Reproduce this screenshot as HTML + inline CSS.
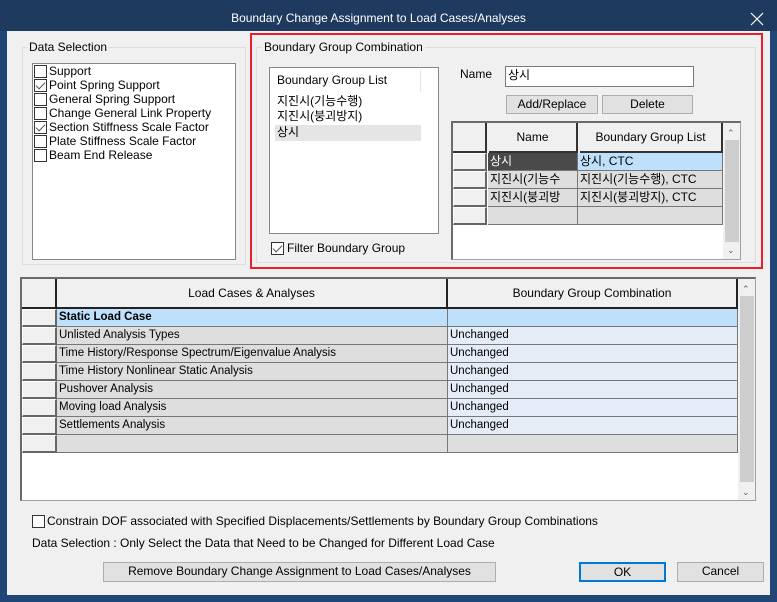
<!DOCTYPE html>
<html><head><meta charset="utf-8"><style>
*{box-sizing:border-box;margin:0;padding:0}
body{width:777px;height:602px;background:#1f4677;font-family:"Liberation Sans","Noto Sans CJK KR",sans-serif;font-size:12px;color:#000;position:relative;overflow:hidden}
.a{position:absolute}
.t{position:absolute;white-space:nowrap;line-height:14px}
.cb{position:absolute;width:13px;height:13px;border:1px solid #333;background:#fff}
.cb.on::after{content:"";position:absolute;left:3px;top:0px;width:4px;height:8px;border-right:1.2px solid #555;border-bottom:1.2px solid #555;transform:rotate(45deg)}
.btn{position:absolute;background:#e1e1e1;border:1px solid #adadad;text-align:center;line-height:17px}
.cell{position:absolute;border-right:1px solid #777;border-bottom:1px solid #777;white-space:nowrap;overflow:hidden;padding-left:2px;line-height:17px}
.rh{position:absolute;background:#f0f0f0;border:1px solid #fff;border-right:2px solid #666;border-bottom:2px solid #666}
</style></head><body>
<div class="a" style="left:0;top:0;width:777px;height:31px;background:#1e3a5f"></div>
<div class="t" style="left:0;width:757px;top:11px;text-align:center;color:#fff;font-size:12px">Boundary Change Assignment to Load Cases/Analyses</div>
<svg class="a" style="left:750px;top:12px" width="14" height="14"><path d="M1 1L13 13M13 1L1 13" stroke="#fff" stroke-width="1.2"/></svg>
<div class="a" style="left:7px;top:31px;width:763px;height:564px;background:#f0f0f0"></div>

<!-- Data selection -->
<div class="a" style="left:22px;top:47px;width:224px;height:218px;border:1px solid #dcdcdc"></div>
<div class="t" style="left:27px;top:40px;background:#f0f0f0;padding:0 2px">Data Selection</div>
<div class="a" style="left:32px;top:63px;width:204px;height:197px;background:#fff;border:1px solid #828790"></div>
<div class="cb" style="left:34px;top:65px"></div><div class="t" style="left:49px;top:64px">Support</div>
<div class="cb on" style="left:34px;top:79px"></div><div class="t" style="left:49px;top:78px">Point Spring Support</div>
<div class="cb" style="left:34px;top:93px"></div><div class="t" style="left:49px;top:92px">General Spring Support</div>
<div class="cb" style="left:34px;top:107px"></div><div class="t" style="left:49px;top:106px">Change General Link Property</div>
<div class="cb on" style="left:34px;top:121px"></div><div class="t" style="left:49px;top:120px">Section Stiffness Scale Factor</div>
<div class="cb" style="left:34px;top:135px"></div><div class="t" style="left:49px;top:134px">Plate Stiffness Scale Factor</div>
<div class="cb" style="left:34px;top:149px"></div><div class="t" style="left:49px;top:148px">Beam End Release</div>

<!-- Red box -->
<div class="a" style="left:250px;top:33px;width:513px;height:236px;border:2px solid #e8202a"></div>
<div class="a" style="left:256px;top:47px;width:500px;height:216px;border:1px solid #dcdcdc"></div>
<div class="t" style="left:262px;top:40px;background:#f0f0f0;padding:0 2px">Boundary Group Combination</div>
<div class="a" style="left:269px;top:67px;width:170px;height:167px;background:#fff;border:1px solid #828790"></div>
<div class="a" style="left:420px;top:70px;width:1px;height:22px;background:#e5e5e5"></div>
<div class="t" style="left:277px;top:73px">Boundary Group List</div>
<div class="t" style="left:277px;top:94px">지진시(기능수행)</div>
<div class="t" style="left:277px;top:109px">지진시(붕괴방지)</div>
<div class="a" style="left:275px;top:125px;width:146px;height:16px;background:#e5e5e5"></div>
<div class="t" style="left:277px;top:125px">상시</div>
<div class="cb on" style="left:271px;top:242px"></div><div class="t" style="left:287px;top:241px">Filter Boundary Group</div>
<div class="t" style="left:460px;top:67px">Name</div>
<div class="a" style="left:505px;top:66px;width:189px;height:21px;background:#fff;border:1px solid #7a7a7a"></div>
<div class="t" style="left:508px;top:68px">상시</div>
<div class="btn" style="left:506px;top:95px;width:92px;height:19px">Add/Replace</div>
<div class="btn" style="left:602px;top:95px;width:91px;height:19px">Delete</div>

<!-- small grid -->
<div class="a" style="left:451px;top:121px;width:290px;height:139px;background:#fff;border:1px solid #a0a0a0;border-top:2px solid #6a6a6a;border-left:2px solid #6a6a6a"></div>
<div class="a" style="left:453px;top:123px;width:270px;height:30px;background:#f0f0f0"></div>
<div class="a" style="left:453px;top:123px;width:34px;height:30px;border-right:2px solid #333;border-bottom:2px solid #333"></div>
<div class="a" style="left:489px;top:123px;width:89px;height:30px;border-right:2px solid #333;border-bottom:2px solid #333;text-align:center;line-height:28px">Name</div>
<div class="a" style="left:580px;top:123px;width:143px;height:30px;border-right:2px solid #333;border-bottom:2px solid #333;text-align:center;line-height:28px">Boundary Group List</div>
<div class="rh" style="left:453px;top:153px;width:34px;height:18px"></div>
<div class="rh" style="left:453px;top:171px;width:34px;height:18px"></div>
<div class="rh" style="left:453px;top:189px;width:34px;height:18px"></div>
<div class="rh" style="left:453px;top:207px;width:34px;height:18px"></div>
<div class="cell" style="left:488px;top:153px;width:90px;height:18px;background:#4a4a4a;color:#fff">상시</div>
<div class="cell" style="left:578px;top:153px;width:145px;height:18px;background:#bfe0fa">상시, CTC</div>
<div class="cell" style="left:488px;top:171px;width:90px;height:18px;background:#dedede">지진시(기능수</div>
<div class="cell" style="left:578px;top:171px;width:145px;height:18px;background:#dedede">지진시(기능수행), CTC</div>
<div class="cell" style="left:488px;top:189px;width:90px;height:18px;background:#dedede">지진시(붕괴방</div>
<div class="cell" style="left:578px;top:189px;width:145px;height:18px;background:#dedede">지진시(붕괴방지), CTC</div>
<div class="cell" style="left:488px;top:207px;width:90px;height:18px;background:#dedede"></div>
<div class="cell" style="left:578px;top:207px;width:145px;height:18px;background:#dedede"></div>
<div class="a" style="left:723px;top:123px;width:17px;height:136px;background:#f0f0f0"></div>
<div class="a" style="left:725px;top:140px;width:14px;height:102px;background:#cdcdcd"></div>
<div class="t" style="left:727px;top:126px;font-size:9px;color:#606060">&#8963;</div>
<div class="t" style="left:727px;top:243px;font-size:9px;color:#606060">&#8964;</div>

<!-- big grid -->
<div class="a" style="left:20px;top:277px;width:736px;height:224px;background:#fff;border:1px solid #a0a0a0;border-top:2px solid #6a6a6a;border-left:2px solid #6a6a6a"></div>
<div class="a" style="left:22px;top:279px;width:715px;height:30px;background:#f0f0f0"></div>
<div class="a" style="left:22px;top:279px;width:35px;height:30px;border-right:2px solid #222;border-bottom:2px solid #222"></div>
<div class="a" style="left:57px;top:279px;width:391px;height:30px;border-right:2px solid #222;border-bottom:2px solid #222;text-align:center;line-height:28px;font-size:12px">Load Cases &amp; Analyses</div>
<div class="a" style="left:448px;top:279px;width:290px;height:30px;border-right:2px solid #222;border-bottom:2px solid #222;text-align:center;line-height:28px;font-size:12px">Boundary Group Combination</div>
<div class="rh" style="left:22px;top:309px;width:35px;height:18px"></div>
<div class="rh" style="left:22px;top:327px;width:35px;height:18px"></div>
<div class="rh" style="left:22px;top:345px;width:35px;height:18px"></div>
<div class="rh" style="left:22px;top:363px;width:35px;height:18px"></div>
<div class="rh" style="left:22px;top:381px;width:35px;height:18px"></div>
<div class="rh" style="left:22px;top:399px;width:35px;height:18px"></div>
<div class="rh" style="left:22px;top:417px;width:35px;height:18px"></div>
<div class="rh" style="left:22px;top:435px;width:35px;height:18px"></div>
<div class="cell" style="left:57px;top:309px;width:391px;height:18px;background:#bfe0fa;font-weight:bold;font-size:11.5px">Static Load Case</div>
<div class="cell" style="left:448px;top:309px;width:290px;height:18px;background:#bfe0fa"></div>
<div class="cell" style="left:57px;top:327px;width:391px;height:18px;background:#dedede;font-size:11.5px">Unlisted Analysis Types</div>
<div class="cell" style="left:448px;top:327px;width:290px;height:18px;background:#e4ecf7;font-size:11.5px">Unchanged</div>
<div class="cell" style="left:57px;top:345px;width:391px;height:18px;background:#dedede;font-size:11.5px">Time History/Response Spectrum/Eigenvalue Analysis</div>
<div class="cell" style="left:448px;top:345px;width:290px;height:18px;background:#e4ecf7;font-size:11.5px">Unchanged</div>
<div class="cell" style="left:57px;top:363px;width:391px;height:18px;background:#dedede;font-size:11.5px">Time History Nonlinear Static Analysis</div>
<div class="cell" style="left:448px;top:363px;width:290px;height:18px;background:#e4ecf7;font-size:11.5px">Unchanged</div>
<div class="cell" style="left:57px;top:381px;width:391px;height:18px;background:#dedede;font-size:11.5px">Pushover Analysis</div>
<div class="cell" style="left:448px;top:381px;width:290px;height:18px;background:#e4ecf7;font-size:11.5px">Unchanged</div>
<div class="cell" style="left:57px;top:399px;width:391px;height:18px;background:#dedede;font-size:11.5px">Moving load Analysis</div>
<div class="cell" style="left:448px;top:399px;width:290px;height:18px;background:#e4ecf7;font-size:11.5px">Unchanged</div>
<div class="cell" style="left:57px;top:417px;width:391px;height:18px;background:#dedede;font-size:11.5px">Settlements Analysis</div>
<div class="cell" style="left:448px;top:417px;width:290px;height:18px;background:#e4ecf7;font-size:11.5px">Unchanged</div>
<div class="cell" style="left:57px;top:435px;width:391px;height:18px;background:#dedede"></div>
<div class="cell" style="left:448px;top:435px;width:290px;height:18px;background:#dedede"></div>
<div class="a" style="left:738px;top:279px;width:17px;height:221px;background:#f0f0f0"></div>
<div class="a" style="left:740px;top:296px;width:14px;height:186px;background:#cdcdcd"></div>
<div class="t" style="left:742px;top:282px;font-size:9px;color:#606060">&#8963;</div>
<div class="t" style="left:742px;top:485px;font-size:9px;color:#606060">&#8964;</div>

<!-- bottom -->
<div class="cb" style="left:32px;top:515px"></div>
<div class="t" style="left:47px;top:514px">Constrain DOF associated with Specified Displacements/Settlements by Boundary Group Combinations</div>
<div class="t" style="left:32px;top:536px">Data Selection : Only Select the Data that Need to be Changed for Different Load Case</div>
<div class="btn" style="left:103px;top:562px;width:393px;height:20px">Remove Boundary Change Assignment to Load Cases/Analyses</div>
<div class="btn" style="left:579px;top:562px;width:87px;height:20px;border:2px solid #0078d7;line-height:16px">OK</div>
<div class="btn" style="left:677px;top:562px;width:87px;height:20px">Cancel</div>
</body></html>
